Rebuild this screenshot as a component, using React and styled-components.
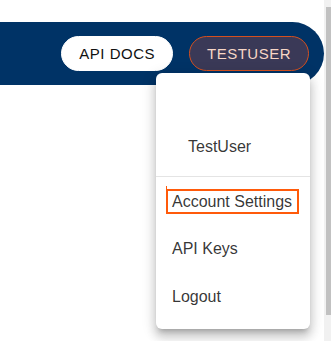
import React from 'react';
import styled, { createGlobalStyle } from 'styled-components';

const GlobalStyle = createGlobalStyle`
  html, body {
    margin: 0;
    padding: 0;
    background: #ffffff;
    font-family: "Liberation Sans", Arial, sans-serif;
  }
`;

const Page = styled.div`
  display: flex;
  flex-direction: row;
  width: 331px;
  height: 341px;
  overflow: hidden;
`;

const Main = styled.div`
  position: relative;
  flex: 1;
  padding-top: 22px;
`;

const TopBar = styled.header`
  display: flex;
  flex-direction: row;
  justify-content: flex-end;
  align-items: center;
  gap: 16px;
  height: 63px;
  padding-right: 15px;
  background-color: #003366;
  border-radius: 0 32px 32px 0;
`;

const PillButton = styled.button`
  height: 35px;
  padding: 0 17px;
  border-radius: 18px;
  font-family: "Liberation Sans", Arial, sans-serif;
  font-size: 15px;
  letter-spacing: 0.5px;
  text-transform: uppercase;
  white-space: nowrap;
  cursor: pointer;
  border: 1px solid ${props => (props.active ? '#d4501f' : '#ffffff')};
  background-color: ${props => (props.active ? '#3a3957' : '#ffffff')};
  color: ${props => (props.active ? '#f7d6c6' : '#111111')};
`;

const Menu = styled.div`
  position: absolute;
  top: 73px;
  left: 156px;
  width: 154px;
  padding-bottom: 8px;
  background: #ffffff;
  border-radius: 6px;
  box-shadow: 0px 5px 5px -3px rgba(0, 0, 0, 0.2),
    0px 8px 10px 1px rgba(0, 0, 0, 0.14), 0px 3px 14px 2px rgba(0, 0, 0, 0.12);
`;

const UserName = styled.div`
  display: flex;
  align-items: flex-end;
  height: 103px;
  padding: 0 32px 17px;
  box-sizing: border-box;
  font-size: 16px;
  line-height: 24px;
  color: rgba(0, 0, 0, 0.8);
`;

const Divider = styled.hr`
  margin: 0;
  border: none;
  height: 1px;
  background-color: #e4e4e4;
`;

const MenuItem = styled.div`
  display: flex;
  align-items: center;
  height: 48px;
  padding: 0 16px;
  font-size: 16px;
  white-space: nowrap;
  color: rgba(0, 0, 0, 0.8);
  cursor: pointer;
`;

const FocusLabel = styled.span`
  position: relative;
  display: inline-block;
  margin-left: -6px;
  padding: 2px 5px 2px 4px;
  line-height: 17px;
  white-space: nowrap;
  border: 2px solid #ff5a0a;

  &::before {
    content: '';
    position: absolute;
    top: -5px;
    left: -2px;
    width: 1px;
    height: 3px;
    background: #ff5a0a;
  }
`;

const ScrollTrack = styled.div`
  display: flex;
  flex-direction: column;
  width: 5px;
  padding: 7px 0 26px 2px;
  background-color: #f1f1f1;
`;

const ScrollThumb = styled.div`
  flex: 1;
  background-color: #c1c1c1;
`;

const items = [
  { id: 'settings', label: 'Account Settings', focused: true },
  { id: 'keys', label: 'API Keys' },
  { id: 'logout', label: 'Logout' },
];

export default function App() {
  return (
    <>
      <GlobalStyle />
      <Page>
        <Main>
          <TopBar>
            <PillButton>API Docs</PillButton>
            <PillButton active>TestUser</PillButton>
          </TopBar>

          <Menu>
            <UserName>TestUser</UserName>
            <Divider />
            {items.map(item => (
              <MenuItem key={item.id}>
                {item.focused ? <FocusLabel>{item.label}</FocusLabel> : item.label}
              </MenuItem>
            ))}
          </Menu>
        </Main>
        <ScrollTrack>
          <ScrollThumb />
        </ScrollTrack>
      </Page>
    </>
  );
}
